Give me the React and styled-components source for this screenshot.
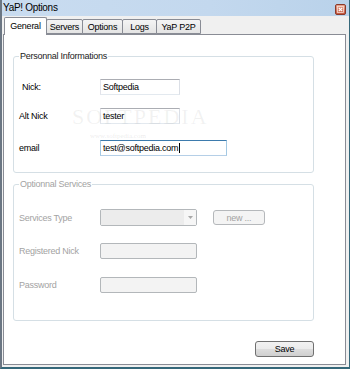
import React from "react";
import styled, { createGlobalStyle } from "styled-components";

const GlobalStyle = createGlobalStyle`
  html, body {
    margin: 0;
    padding: 0;
    background: #f0f0f0;
  }
  body {
    font-family: "Liberation Sans", Arial, sans-serif;
  }
  * {
    box-sizing: border-box;
  }
`;

const uiFont = `
  font-size: 9px;
  letter-spacing: -0.25px;
`;

const Window = styled.div`
  position: relative;
  width: 350px;
  height: 369px;
  display: flex;
  flex-direction: column;
  background: #f0f0f0;
  border-left: 2px solid #6b7683;
  border-right: 1px solid #35687a;
  border-bottom: 2px solid #35687a;
  overflow: hidden;
`;

const TitleBar = styled.div`
  height: 16px;
  display: flex;
  align-items: flex-start;
  justify-content: space-between;
  padding: 0 3px 0 1px;
  background: linear-gradient(90deg, #c9dcf0 0%, #c3d8ee 60%, #b9d2ea 100%);
`;

const Title = styled.span`
  font-size: 10px;
  letter-spacing: -0.3px;
  line-height: 16px;
  color: #000;
`;

const CloseBox = styled.div`
  margin-top: 4px;
  width: 11px;
  height: 11px;
  display: flex;
`;

const Body = styled.div`
  flex: 1;
  display: flex;
  flex-direction: column;
  padding: 0 3px 2px 1px;
`;

const TabStrip = styled.div`
  height: 18px;
  display: flex;
  align-items: flex-end;
  padding-left: 1px;
`;

const Tab = styled.div`
  position: relative;
  width: ${(p) => p.$w}px;
  height: ${(p) => (p.$active ? 18 : 15)}px;
  margin-bottom: ${(p) => (p.$active ? -1 : 0)}px;
  margin-left: ${(p) => (p.$first ? 0 : -1)}px;
  z-index: ${(p) => (p.$active ? 2 : 1)};
  display: flex;
  align-items: center;
  justify-content: center;
  padding-bottom: ${(p) => (p.$active ? 2 : 0)}px;
  border: 1px solid #898c95;
  border-bottom: ${(p) => (p.$active ? "none" : "1px solid #898c95")};
  border-radius: 2px 2px 0 0;
  background: ${(p) =>
    p.$active ? "#ffffff" : "linear-gradient(#f4f4f4, #e4e4e4)"};
  ${uiFont}
  color: #000;
`;

const Panel = styled.div`
  position: relative;
  flex: 1;
  display: flex;
  flex-direction: column;
  background: #fff;
  border: 1px solid #898c95;
  padding: 21px 31px 0 9px;
`;

const GroupBox = styled.div`
  position: relative;
  height: ${(p) => p.$h}px;
  margin-top: ${(p) => p.$mt}px;
  border: 1px solid #d5dfe5;
  border-radius: 3px;
  padding-left: 5px;
  display: flex;
  flex-direction: column;
`;

const Legend = styled.span`
  position: absolute;
  top: -6px;
  left: 5px;
  padding: 0 1px;
  background: #fff;
  ${uiFont}
  line-height: 11px;
  color: ${(p) => (p.$disabled ? "#a3a3a3" : "#1a1a1a")};
`;

const Row = styled.div`
  display: flex;
  align-items: center;
  height: ${(p) => p.$h || 16}px;
  margin-top: ${(p) => p.$mt}px;
`;

const Label = styled.span`
  width: 81px;
  padding-left: ${(p) => p.$indent || 0}px;
  ${uiFont}
  color: ${(p) => (p.$disabled ? "#a3a3a3" : "#000")};
`;

const TextBox = styled.div`
  width: ${(p) => p.$w}px;
  height: 16px;
  display: flex;
  align-items: center;
  padding-left: 2px;
  background: #fff;
  border: 1px solid;
  border-color: ${(p) =>
    p.$focused
      ? "#3d7bad #a4c9e3 #b5cfe7 #a4c9e3"
      : "#abadb3 #dbdfe6 #e3e9ef #e2e3ea"};
  ${uiFont}
  color: #000;
  white-space: nowrap;
`;

const Caret = styled.span`
  display: inline-block;
  width: 1px;
  height: 10px;
  margin-left: 1px;
  background: #000;
`;

const DisabledBox = styled.div`
  width: ${(p) => p.$w}px;
  height: ${(p) => p.$h || 16}px;
  display: flex;
  background: #f3f3f3;
  border: 1px solid #b3b7ba;
  border-radius: 2px;
`;

const ComboFill = styled.div`
  flex: 1;
  background: #ececec;
`;

const ComboArrow = styled.div`
  width: 12px;
  display: flex;
  align-items: center;
  justify-content: center;
  background: #f6f6f6;
`;

const SmallButton = styled.div`
  width: ${(p) => p.$w}px;
  height: ${(p) => p.$h}px;
  margin-left: ${(p) => p.$ml || 0}px;
  display: flex;
  align-items: center;
  justify-content: center;
  border: 1px solid ${(p) => (p.$disabled ? "#b5b8bb" : "#707070")};
  border-radius: 3px;
  background: ${(p) =>
    p.$disabled
      ? "#f4f4f4"
      : "linear-gradient(#f2f2f2 0%, #ebebeb 50%, #dddddd 51%, #cfcfcf 100%)"};
  ${uiFont}
  color: ${(p) => (p.$disabled ? "#a3a3a3" : "#000")};
`;

const Footer = styled.div`
  display: flex;
  justify-content: flex-end;
  margin-top: 20px;
`;

const Watermark = styled.div`
  position: absolute;
  left: ${(p) => p.$x}px;
  top: ${(p) => p.$y}px;
  font-family: "Liberation Serif", "Times New Roman", serif;
  font-size: ${(p) => p.$size}px;
  letter-spacing: ${(p) => p.$ls || 0}px;
  color: rgba(150, 150, 150, ${(p) => p.$alpha});
  pointer-events: none;
  white-space: nowrap;
`;

const tabs = [
  { name: "General", w: 43, active: true },
  { name: "Servers", w: 37 },
  { name: "Options", w: 41 },
  { name: "Logs", w: 35 },
  { name: "YaP P2P", w: 45 },
];

function CloseIcon() {
  return (
    <svg width="11" height="11" viewBox="0 0 11 11">
      <defs>
        <linearGradient id="cl" x1="0" y1="0" x2="0" y2="1">
          <stop offset="0" stopColor="#e9a792" />
          <stop offset="1" stopColor="#c5533a" />
        </linearGradient>
      </defs>
      <rect x="0.5" y="0.5" width="10" height="10" rx="1.5" fill="url(#cl)" stroke="#8a3a2a" />
      <rect x="2.5" y="2.5" width="6" height="6" fill="none" stroke="#f4dcd4" strokeWidth="0.8" />
      <path d="M3.8 3.8 L7.2 7.2 M7.2 3.8 L3.8 7.2" stroke="#fff" strokeWidth="1.2" />
    </svg>
  );
}

function DownArrow() {
  return (
    <svg width="5" height="3" viewBox="0 0 5 3">
      <path d="M0 0 H5 L2.5 3 Z" fill="#a8a8a8" />
    </svg>
  );
}

export default function App() {
  return (
    <>
      <GlobalStyle />
      <Window>
        <TitleBar>
          <Title>YaP! Options</Title>
          <CloseBox>
            <CloseIcon />
          </CloseBox>
        </TitleBar>
        <Body>
          <TabStrip>
            {tabs.map((t, i) => (
              <Tab key={t.name} $w={t.w} $active={t.active} $first={i === 0}>
                {t.name}
              </Tab>
            ))}
          </TabStrip>
          <Panel>
            <GroupBox $h={117} $mt={0}>
              <Legend>Personnal Informations</Legend>
              <Row $mt={22}>
                <Label $indent={3}>Nick:</Label>
                <TextBox $w={80}>Softpedia</TextBox>
              </Row>
              <Row $mt={13}>
                <Label>Alt Nick</Label>
                <TextBox $w={80}>tester</TextBox>
              </Row>
              <Row $mt={16}>
                <Label>email</Label>
                <TextBox $w={127} $focused>
                  test@softpedia.com
                  <Caret />
                </TextBox>
              </Row>
            </GroupBox>

            <GroupBox $h={137} $mt={11}>
              <Legend $disabled>Optionnal Services</Legend>
              <Row $mt={24} $h={17}>
                <Label $disabled>Services Type</Label>
                <DisabledBox $w={97} $h={17}>
                  <ComboFill />
                  <ComboArrow>
                    <DownArrow />
                  </ComboArrow>
                </DisabledBox>
                <SmallButton $w={52} $h={15} $ml={16} $disabled>
                  new ...
                </SmallButton>
              </Row>
              <Row $mt={17}>
                <Label $disabled>Registered Nick</Label>
                <DisabledBox $w={97} />
              </Row>
              <Row $mt={18}>
                <Label $disabled>Password</Label>
                <DisabledBox $w={97} />
              </Row>
            </GroupBox>

            <Footer>
              <SmallButton $w={59} $h={16}>
                Save
              </SmallButton>
            </Footer>
          </Panel>
        </Body>
        <Watermark $x={70} $y={104} $size={22} $ls={2} $alpha={0.12}>
          SOFTPEDIA
        </Watermark>
        <Watermark $x={88} $y={132} $size={7} $alpha={0.2}>
          www.softpedia.com
        </Watermark>
      </Window>
    </>
  );
}
